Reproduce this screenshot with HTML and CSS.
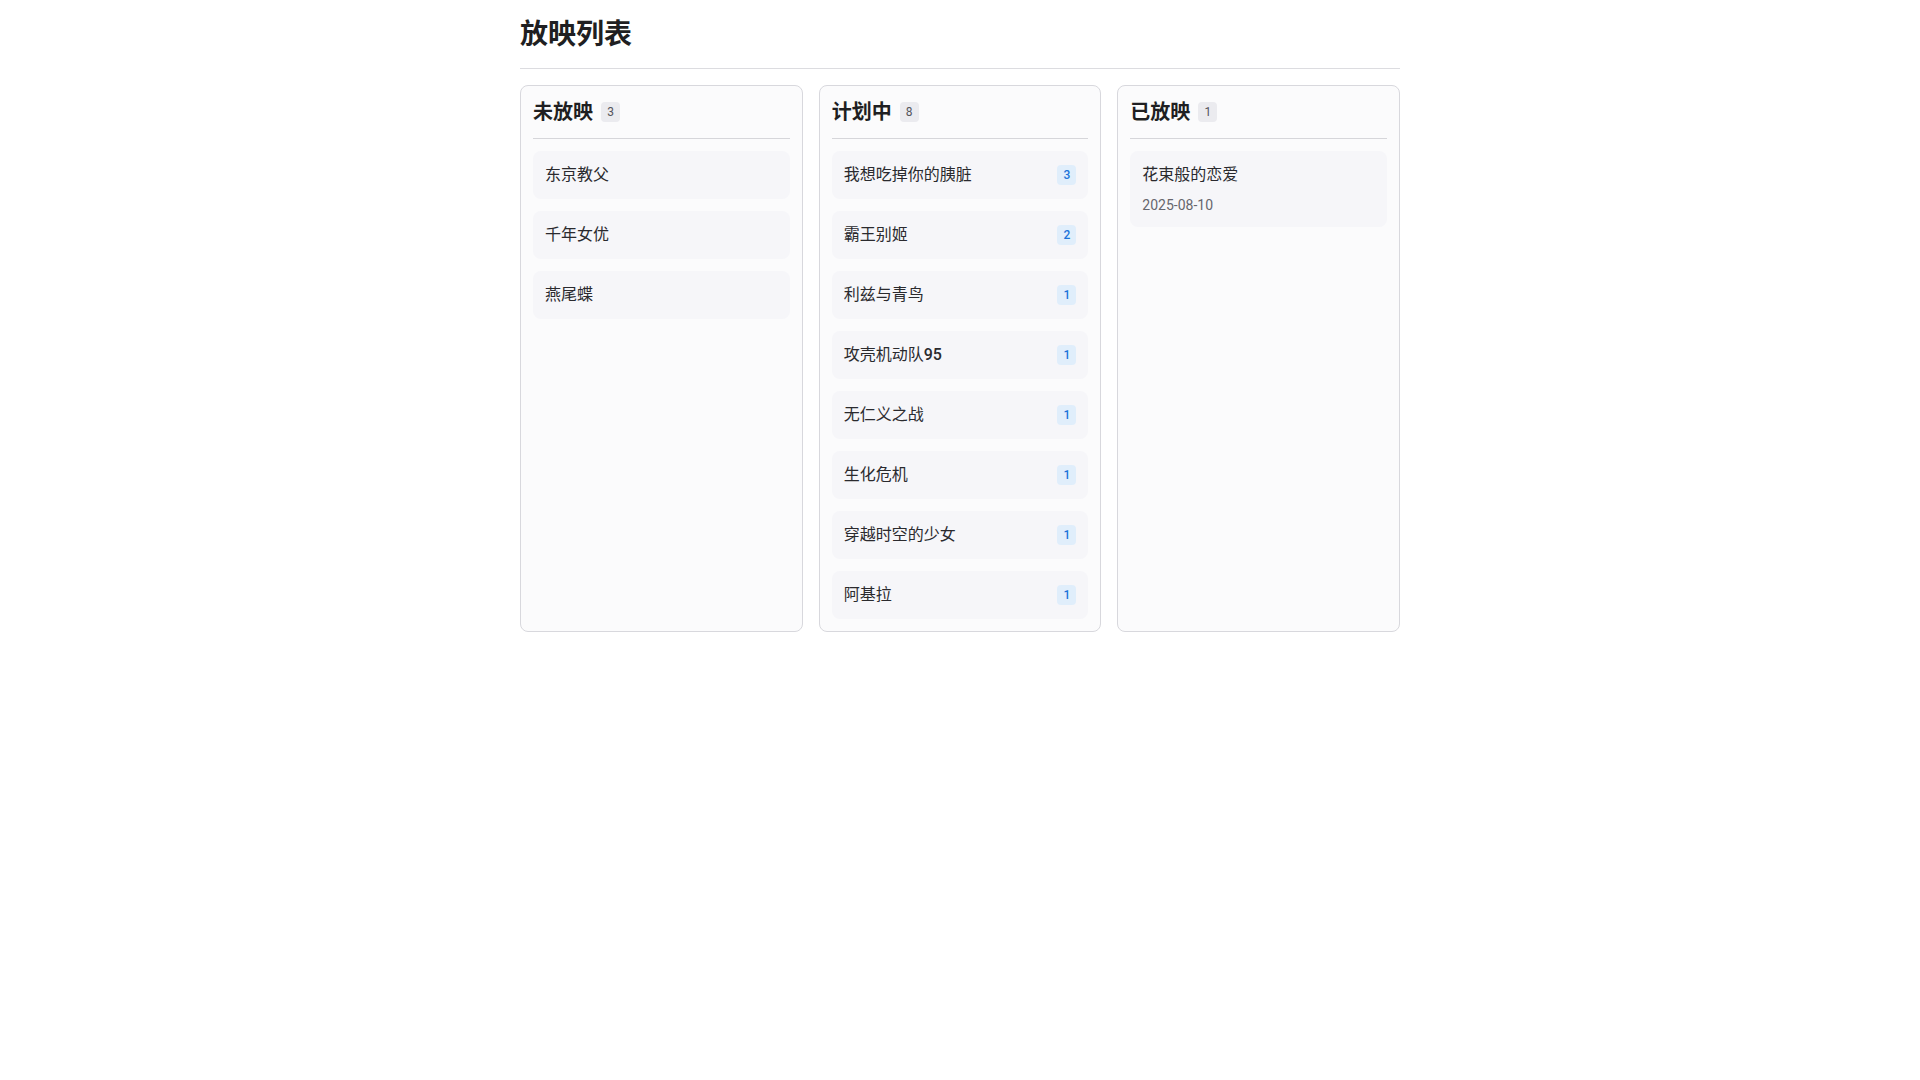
FILE: index.html
```html
<!DOCTYPE html>
<html lang="zh-CN">
<head>
<meta charset="utf-8">
<title>放映列表</title>
<link rel="stylesheet" href="styles.css">
</head>
<body>
<div class="page">
  <header class="page-header">
    <h1 class="page-title">放映列表</h1>
  </header>
  <div class="board">
    <section class="column">
      <div class="column-header">
        <h2 class="column-title">未放映</h2>
        <span class="count">3</span>
      </div>
      <div class="items">
        <div class="item"><span class="item-title">东京教父</span></div>
        <div class="item"><span class="item-title">千年女优</span></div>
        <div class="item"><span class="item-title">燕尾蝶</span></div>
      </div>
    </section>
    <section class="column">
      <div class="column-header">
        <h2 class="column-title">计划中</h2>
        <span class="count">8</span>
      </div>
      <div class="items">
        <div class="item"><span class="item-title">我想吃掉你的胰脏</span><span class="tag">3</span></div>
        <div class="item"><span class="item-title">霸王别姬</span><span class="tag">2</span></div>
        <div class="item"><span class="item-title">利兹与青鸟</span><span class="tag">1</span></div>
        <div class="item"><span class="item-title">攻壳机动队<span class="num">95</span></span><span class="tag">1</span></div>
        <div class="item"><span class="item-title">无仁义之战</span><span class="tag">1</span></div>
        <div class="item"><span class="item-title">生化危机</span><span class="tag">1</span></div>
        <div class="item"><span class="item-title">穿越时空的少女</span><span class="tag">1</span></div>
        <div class="item"><span class="item-title">阿基拉</span><span class="tag">1</span></div>
      </div>
    </section>
    <section class="column">
      <div class="column-header">
        <h2 class="column-title">已放映</h2>
        <span class="count">1</span>
      </div>
      <div class="items">
        <div class="item item-stacked">
          <span class="item-title">花束般的恋爱</span>
          <span class="item-date">2025-08-10</span>
        </div>
      </div>
    </section>
  </div>
</div>
</body>
</html>
```

FILE: styles.css
```css
html, body {
  margin: 0;
  padding: 0;
  background: #ffffff;
}

body {
  font-family: Roboto, "Noto Sans CJK SC", sans-serif;
  color: #222226;
}

.page {
  width: 880px;
  margin: 0 auto;
}

.page-header {
  padding: 17px 0 15px;
  border-bottom: 1px solid #dcdce0;
}

.page-title {
  margin: 0;
  font-size: 28px;
  line-height: 36px;
  font-weight: 700;
  color: #1f1f22;
}

.board {
  margin-top: 16px;
  display: grid;
  grid-template-columns: repeat(3, 1fr);
  gap: 16px;
  align-items: stretch;
}

.column {
  background: #fbfbfc;
  border: 1px solid #d8d8dd;
  border-radius: 8px;
  padding: 12px;
}

.column-header {
  display: flex;
  align-items: center;
  gap: 8px;
  padding-bottom: 12px;
  border-bottom: 1px solid #d6d6da;
  margin-bottom: 12px;
}

.column-title {
  margin: 0;
  font-size: 20px;
  line-height: 28px;
  font-weight: 700;
  color: #1f1f22;
}

.count {
  display: inline-flex;
  align-items: center;
  justify-content: center;
  min-width: 19px;
  height: 20px;
  padding: 0 5px;
  box-sizing: border-box;
  border-radius: 4px;
  background: #ebebef;
  color: #55555c;
  font-size: 12px;
}

.items {
  display: flex;
  flex-direction: column;
  gap: 12px;
}

.item {
  display: flex;
  align-items: center;
  justify-content: space-between;
  padding: 12px;
  border-radius: 8px;
  background: #f6f6f9;
}

.item-stacked {
  flex-direction: column;
  align-items: flex-start;
  justify-content: flex-start;
}

.item-title {
  font-size: 16px;
  line-height: 24px;
  font-weight: 400;
  color: #2a2a2e;
}

.num {
  font-weight: 500;
}

.item-date {
  margin-top: 8px;
  font-size: 14px;
  line-height: 20px;
  color: #66666d;
}

.tag {
  display: inline-flex;
  align-items: center;
  justify-content: center;
  min-width: 19px;
  height: 20px;
  padding: 0 5px;
  box-sizing: border-box;
  border-radius: 4px;
  background: #e0eefb;
  color: #1a73d9;
  font-size: 12px;
  font-weight: 500;
}
```
